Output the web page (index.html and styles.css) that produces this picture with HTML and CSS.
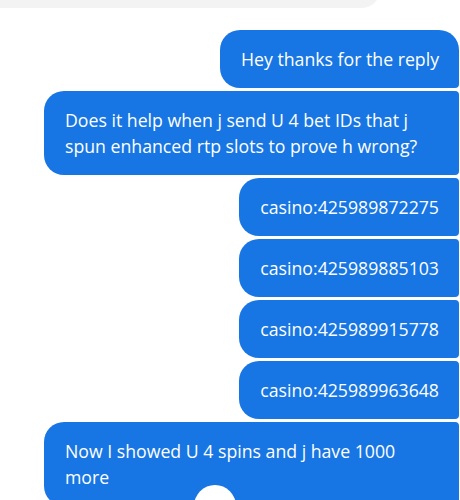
FILE: index.html
```html
<!DOCTYPE html>
<html lang="en">
<head>
<meta charset="utf-8">
<title>Chat</title>
<link rel="stylesheet" href="styles.css">
</head>
<body>
<main class="thread">
  <div class="incoming"></div>
  <div class="group">
    <div class="bubble first">Hey thanks for the reply</div>
    <div class="bubble">Does it help when j send U 4 bet IDs that j spun enhanced rtp slots to prove h wrong?</div>
    <div class="bubble">casino:425989872275</div>
    <div class="bubble">casino:425989885103</div>
    <div class="bubble">casino:425989915778</div>
    <div class="bubble">casino:425989963648</div>
    <div class="bubble">Now I showed U 4 spins and j have 1000 more</div>
  </div>
  <div class="jump"></div>
</main>
</body>
</html>
```
FILE: styles.css
```css
html, body {
  margin: 0;
  padding: 0;
  background: #ffffff;
}

.thread {
  position: relative;
  width: 460px;
  height: 500px;
  overflow: hidden;
  display: flex;
  flex-direction: column;
  font-family: "Open Sans", "Noto Sans", sans-serif;
}

.incoming {
  align-self: flex-start;
  width: 381px;
  height: 48px;
  margin-top: -40px;
  background: #f3f3f3;
  border-radius: 0 20px 20px 0;
  flex: none;
}

.group {
  margin-top: 22px;
  padding-right: 1px;
  display: flex;
  flex-direction: column;
  align-items: flex-end;
  gap: 3px;
}

.bubble {
  box-sizing: border-box;
  max-width: 415px;
  padding: 16px 20px 16px 21px;
  font-size: 17.7px;
  line-height: 26px;
  color: #ffffff;
  background: #1776e3;
  border-radius: 20px 4px 4px 20px;
}

.bubble.first {
  border-top-right-radius: 20px;
}

.jump {
  position: absolute;
  left: 194px;
  top: 485px;
  width: 42px;
  height: 42px;
  border-radius: 50%;
  background: #ffffff;
}
```
